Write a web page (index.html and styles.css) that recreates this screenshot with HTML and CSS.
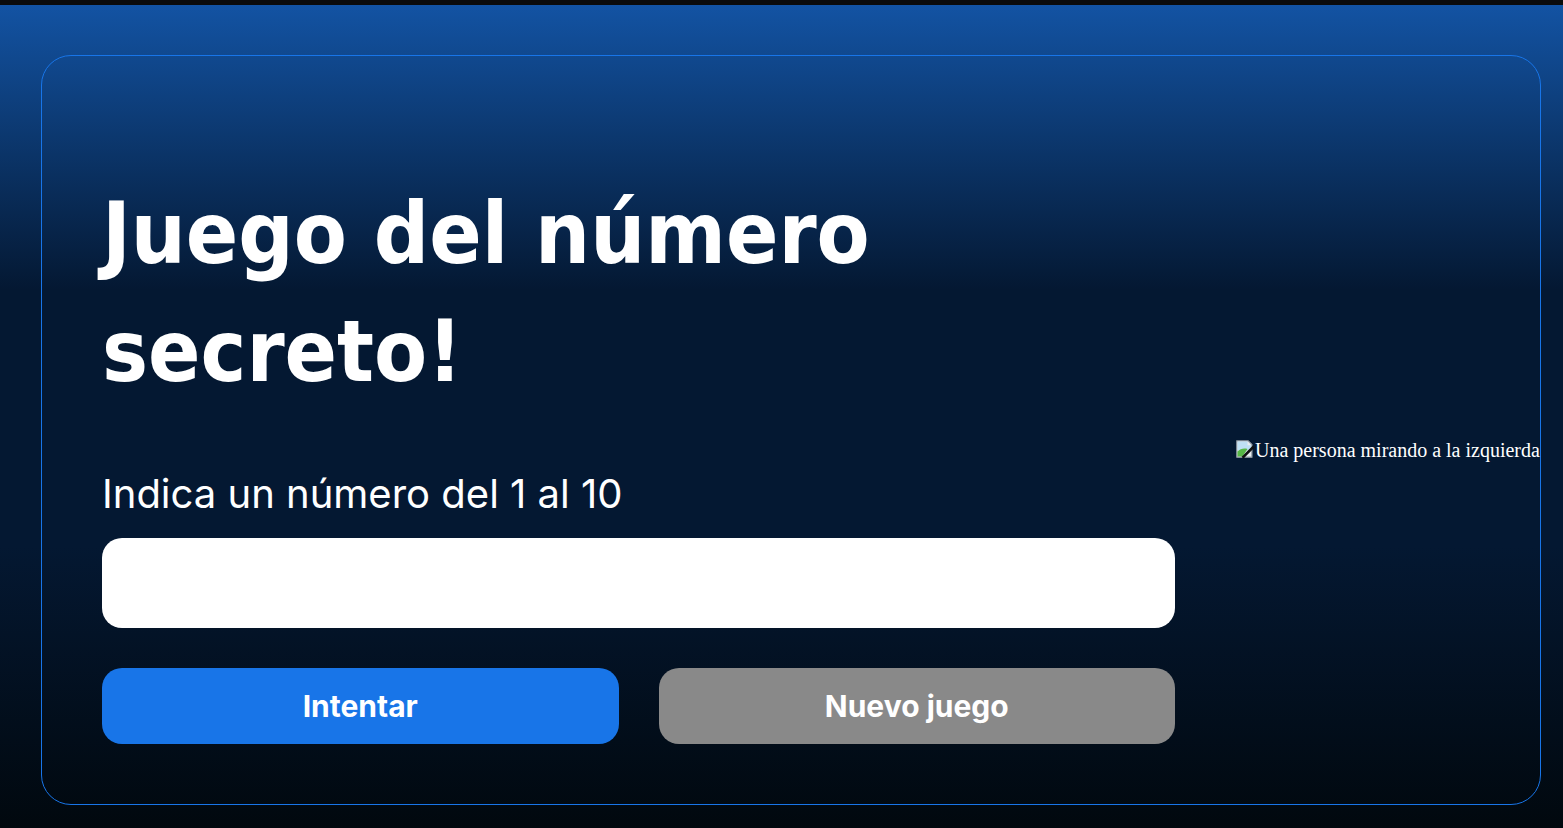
FILE: index.html
```html
<!DOCTYPE html>
<html lang="es">
<head>
    <meta charset="UTF-8">
    <meta name="viewport" content="width=device-width, initial-scale=1.0">
    <title>Juego del número secreto</title>
    <link rel="stylesheet" href="styles.css">
</head>
<body>
    <div class="container">
        <div class="container__contenido">
            <div class="container__informaciones">
                <h1>Juego del número secreto!</h1>
                <p class="texto__parrafo">Indica un número del 1 al 10</p>
                <input type="number" min="1" max="10" class="container__input">
                <div class="container__botones">
                    <button class="container__boton">Intentar</button>
                    <button class="container__boton" disabled>Nuevo juego</button>
                </div>
            </div>
        </div>
        <span class="container__imagen-persona">
            <svg class="icono-roto" width="20" height="20" viewBox="0 0 16 16">
                <path d="M1.5 1.5h9l3 3v10h-12z" fill="#e9eef2" stroke="#9aa3ab"/>
                <path d="M2 2h8v3h3v4H2z" fill="#bfe0f5"/>
                <path d="M2 10c2-2 5-3 8-2l-4 6H2z" fill="#58b847"/>
                <path d="M6 15l9-9" stroke="#111" stroke-width="2"/>
            </svg>Una persona mirando a la izquierda
        </span>
    </div>
</body>
</html>
```

FILE: styles.css
```css
body, html {
    margin: 0;
    padding: 0;
    height: 100%;
    overflow: hidden;
}
body {
    border-top: 5px solid #0b0b0b;
    box-sizing: border-box;
    background: linear-gradient(#1354A5 0%, #041832 35%, #041832 66%, #01080E 100%);
    color: #fff;
}
.container {
    box-sizing: border-box;
    width: 1500px;
    height: 750px;
    margin: 50px 0 0 41px;
    border: 1px solid #1875E8;
    border-radius: 30px;
    display: flex;
    align-items: flex-start;
    gap: 60px;
    padding: 118px 0 0 60px;
}
.container__contenido {
    width: 1073px;
}
h1 {
    font-family: "DejaVu Sans Condensed", "DejaVu Sans", sans-serif;
    font-weight: 700;
    font-size: 86px;
    line-height: 118px;
    margin: 0 0 59px;
}
.texto__parrafo {
    font-family: Inter, sans-serif;
    font-size: 40px;
    font-weight: 400;
    margin: 0;
}
.container__input {
    display: block;
    box-sizing: border-box;
    width: 100%;
    height: 90px;
    margin-top: 20px;
    border: none;
    border-radius: 20px;
    background-color: #fff;
    padding: 0 40px;
    color: #1875E8;
    font-family: Inter, sans-serif;
    font-size: 30px;
    font-weight: 700;
}
.container__botones {
    display: flex;
    gap: 40px;
    margin-top: 40px;
}
.container__boton {
    flex: 1;
    height: 76px;
    border: none;
    border-radius: 20px;
    background: #1875E8;
    color: #fff;
    font-family: Inter, sans-serif;
    font-size: 30px;
    font-weight: 700;
}
.container__boton:disabled {
    background-color: #898989;
}
.container__imagen-persona {
    margin-top: 265px;
    font-family: "Liberation Serif", serif;
    font-size: 20px;
    white-space: nowrap;
}
.icono-roto {
    vertical-align: -2px;
}
```
